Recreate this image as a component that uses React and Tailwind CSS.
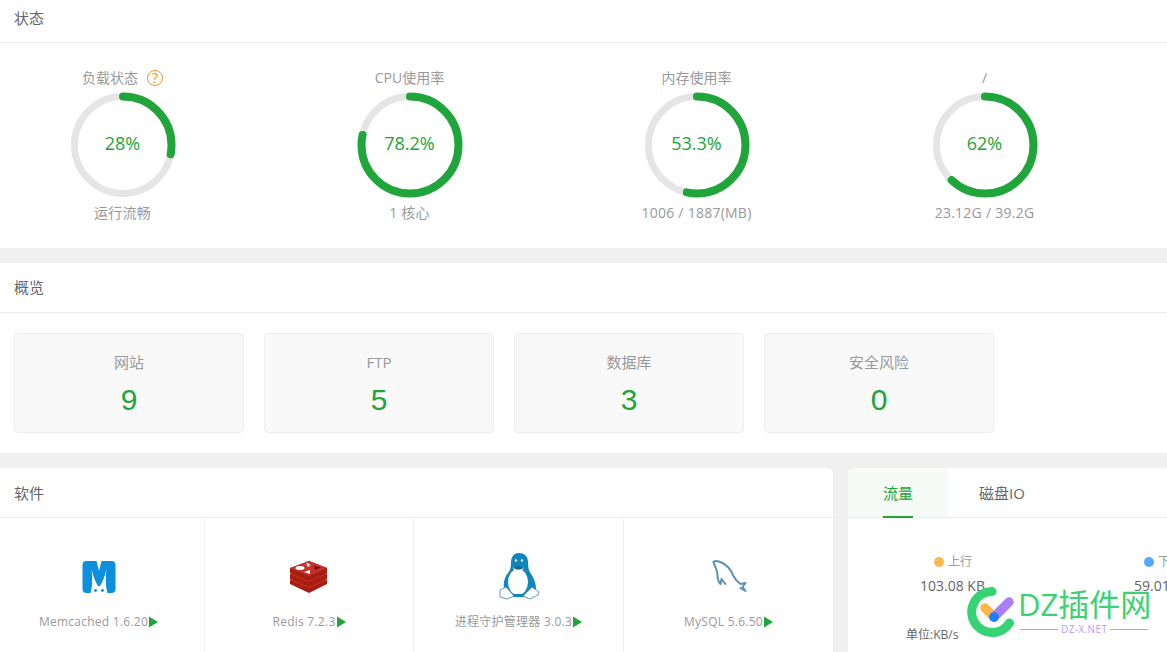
const FONT = 'font-["Open_Sans","Noto_Sans_CJK_SC",sans-serif]';

function Ring({ pct, label, title, sub, help, extra = "" }) {
  const r = 48.5;
  const c = 2 * Math.PI * r;
  return (
    <div className={`flex w-[245px] flex-col items-center ${extra}`}>
      <div className="flex h-5 items-center text-sm leading-5 text-[#999]">
        <span>{title}</span>
        {help && (
          <span className="ml-[9px] flex h-4 w-4 items-center justify-center rounded-full border border-[#f7932e] text-sm leading-none text-[#f7932e]">?</span>
        )}
      </div>
      <div className="relative mt-[5px] h-[104px] w-[104px]">
        <svg width="104" height="104" viewBox="0 0 104 104" className="-rotate-90 overflow-visible">
          <circle cx="52" cy="52" r={r} fill="none" stroke="#e5e5e5" strokeWidth="7" />
          <circle cx="52" cy="52" r={r} fill="none" stroke="#20a53a" strokeWidth="8" strokeLinecap="round" strokeDasharray={`${(pct / 100) * c} ${c}`} />
        </svg>
        <div className="absolute inset-0 flex items-center justify-center pb-1 text-lg text-[#20a53a]">{label}</div>
      </div>
      <div className="mt-[6px] text-sm leading-5 tracking-[0.25px] text-[#999]">{sub}</div>
    </div>
  );
}

function Stat({ title, value }) {
  return (
    <div className="flex h-[100px] w-[230px] flex-col items-center rounded-sm border border-[#eeeeee] bg-[#f9f9f9] pt-[18px]">
      <div className="text-[15px] leading-5 text-[#999]">{title}</div>
      <div className='mt-[9px] font-["Liberation_Sans",sans-serif] text-[30px] leading-[38px] text-[#20a53a]'>{value}</div>
    </div>
  );
}

function Play() {
  return (
    <svg width="9" height="12" viewBox="0 0 9 12" className="ml-[1px] shrink-0">
      <path d="M0 0.5 L9 6 L0 11.5 Z" fill="#20a53a" />
    </svg>
  );
}

function Memcached() {
  return (
    <svg width="60" height="64" viewBox="0 0 60 64">
      <rect x="13.5" y="16" width="33" height="32" rx="4" fill="#0d8fe0" />
      <path d="M27.5 16 L32.5 16 L30 26 Z" fill="#fff" />
      <path d="M22.5 24 C23.5 32 23.5 42 21.5 48 L38.5 48 C36.5 42 36.5 32 37.5 24 C36 31 33.5 37 31 41 L29 41 C26.5 37 24 31 22.5 24 Z" fill="#fff" />
      <circle cx="26.5" cy="45.5" r="1.4" fill="#0d8fe0" />
      <circle cx="33.5" cy="45.5" r="1.4" fill="#0d8fe0" />
    </svg>
  );
}

function Redis() {
  return (
    <svg width="60" height="64" viewBox="0 0 60 64">
      <g transform="translate(0,5)">
        <path d="M11 30 L30 23 L48 30 L48 34 L30 43 L11 34 Z" fill="#a41e11" />
        <path d="M11 30 L30 38 L48 30 L30 23 Z" fill="#d82c20" />
        <path d="M11 24 L30 17 L48 24 L48 29 L30 37 L11 29 Z" fill="#a41e11" />
        <path d="M11 24 L30 32 L48 24 L30 17 Z" fill="#d82c20" />
        <path d="M11 18 L30 11 L48 18 L48 23 L30 31 L11 23 Z" fill="#a41e11" />
        <path d="M11 18 L30 26 L48 18 L30 11 Z" fill="#c6302b" />
        <ellipse cx="21" cy="18" rx="4.5" ry="2" fill="#fff" />
        <path d="M27 13 L31 14 L30 16 L33 15 L29 17 Z" fill="#fff" />
        <path d="M25 22 L31 20 L31 24 Z" fill="#fff" />
        <path d="M35 16 L42 17.5 L36 20 Z" fill="#7a0c00" />
      </g>
    </svg>
  );
}

function Tux() {
  return (
    <svg width="60" height="64" viewBox="0 0 60 60">
      <path d="M30 6 C24 6 22 11 22 16 C22 21 21 23 19 26 C16 30 14 35 15 41 L18 47 L44 47 L47 42 C47 35 44 30 42 27 C40 24 39 21 39 15 C39 9 35 6 30 6 Z" fill="#0f86bd" />
      <ellipse cx="29" cy="35" rx="10" ry="13" fill="#fff" />
      <path d="M24 20 C26 23 33 23 35 20 L33 24 C31 26 27 26 25 24 Z" fill="#fff" />
      <path d="M25 21 C27 19 32 19 34 21 C32 23 27 23 25 21 Z" fill="#1c5f80" />
      <circle cx="27" cy="13.5" r="1.3" fill="#cfe6f2" />
      <circle cx="33" cy="13.5" r="1.3" fill="#cfe6f2" />
      <path d="M22 47 L38 47 L38 50 L22 50 Z" fill="#0f86bd" />
      <path d="M11 43 L17 40 L25 49 L18 52 L11 50 Z" fill="#fff" stroke="#4a90b8" strokeWidth="0.9" />
      <path d="M50 45 L43 40 L34 49 L41 52 L49 48 Z" fill="#fff" stroke="#4a90b8" strokeWidth="0.9" />
    </svg>
  );
}

function Dolphin() {
  return (
    <svg width="60" height="64" viewBox="0 0 60 64">
      <g transform="translate(1.5,5)" fill="none" stroke="#5c93b5" strokeLinecap="round" strokeLinejoin="round">
        <path d="M13 12 C15 10 18 11 22 13 C28 16 31 21 33 26 C35 30 37 32 40 34 L45 33 L42 37 L45 41 L40 38" strokeWidth="2" />
        <path d="M13 12 C14 16 17 20 17 25 C17 29 18 32 20 34 L21 29 L25 34" strokeWidth="2" />
      </g>
    </svg>
  );
}

function Soft({ icon, name, extra, border = true }) {
  return (
    <div className={`flex flex-col items-center pt-[27px] ${border ? "border-r border-[#eeeef5]" : ""} ${extra}`}>
      <div className="flex h-[64px] items-center justify-center">{icon}</div>
      <div className="mt-[3px] flex h-5 items-center whitespace-nowrap text-xs tracking-[0.25px] text-[#999]">
        <span>{name}</span>
        <Play />
      </div>
    </div>
  );
}

function Watermark() {
  return (
    <div className="absolute bottom-[15px] left-[967px] flex h-[50px] items-center">
      <svg width="51" height="50" viewBox="967 587 51 50" className="shrink-0">
        <path d="M992 591.5 A20.5 20.5 0 1 0 1009.5 623" fill="none" stroke="#35d374" strokeWidth="9" strokeLinecap="round" />
        <path d="M985 608 L994 617" stroke="#fdb745" strokeWidth="9.5" strokeLinecap="round" />
        <path d="M994 617 L1009 602" stroke="#a97ff7" strokeWidth="9.5" strokeLinecap="round" />
        <circle cx="994" cy="617" r="4.8" fill="#1a7ffb" />
      </svg>
      <div className="flex flex-col">
        <div className="-mt-[4px] whitespace-nowrap text-[31px] leading-[38px] text-[#3ad272]">DZ插件网</div>
        <div className="flex items-center gap-[3px] pl-[2px] text-[10px] leading-3 tracking-[0.4px] text-[#b79cf5]">
          <span className="h-px w-[38px] bg-[#b79cf5]" />
          <span>DZ-X.NET</span>
          <span className="h-px w-[38px] bg-[#b79cf5]" />
        </div>
      </div>
    </div>
  );
}

export default function App() {
  return (
    <div className={`relative flex h-[652px] w-[1167px] flex-col overflow-hidden bg-[#f0f0f0] ${FONT}`}>
      <section className="h-[248px] shrink-0 bg-white">
        <div className="flex h-[43px] items-center border-b border-[#eeeeee] pb-[6px] pl-[14px] text-[15px] text-[#666]">状态</div>
        <div className="flex gap-[42px] pt-[25px]">
          <Ring pct={28} label="28%" title="负载状态" sub="运行流畅" help />
          <Ring pct={78.2} label="78.2%" title="CPU使用率" sub="1 核心" />
          <Ring pct={53.3} label="53.3%" title="内存使用率" sub="1006 / 1887(MB)" />
          <Ring pct={62} label="62%" title="/" sub="23.12G / 39.2G" extra="ml-[1px]" />
        </div>
      </section>

      <section className="mt-[15px] h-[190px] shrink-0 bg-white">
        <div className="flex h-[50px] items-center border-b border-[#eeeeee] pl-[14px] text-[15px] text-[#666]">概览</div>
        <div className="flex gap-5 px-[14px] pt-5">
          <Stat title="网站" value="9" />
          <Stat title="FTP" value="5" />
          <Stat title="数据库" value="3" />
          <Stat title="安全风险" value="0" />
        </div>
      </section>

      <div className="mt-[15px] flex min-h-0 flex-1 gap-[15px]">
        <section className="w-[833px] shrink-0 rounded-tr-md bg-white">
          <div className="flex h-[50px] items-center border-b border-[#eeeef2] pl-[14px] pt-[2px] text-[15px] text-[#666]">软件</div>
          <div className="grid h-[134px] grid-cols-[205px_209px_210px_209px]">
            <Soft icon={<Memcached />} name="Memcached 1.6.20" extra="pr-[7px]" />
            <Soft icon={<Redis />} name="Redis 7.2.3" extra="" />
            <Soft icon={<Tux />} name="进程守护管理器 3.0.3" extra="" />
            <Soft icon={<Dolphin />} name="MySQL 5.6.50" extra="" border={false} />
          </div>
        </section>

        <section className="min-w-0 flex-1 overflow-hidden rounded-tl-md bg-white">
          <div className="flex h-[50px] border-b border-[#eeeeee] text-[15px]">
            <div className="flex w-[100px] justify-center bg-[#f6fbf7] text-[#20a53a]">
              <div className="flex h-[50px] w-[30px] items-center justify-center whitespace-nowrap border-b-2 border-[#20a53a] pt-[2px]">流量</div>
            </div>
            <div className="ml-[31px] flex items-center pt-[2px] text-[#666]">磁盘IO</div>
          </div>
          <div className="relative flex w-[420px] pl-[58px] pt-[34px]">
            <div className="flex w-[214px] flex-col items-start">
              <div className="flex h-5 items-center pl-[28px] text-xs text-[#999]">
                <span className="mr-[4px] h-[10px] w-[10px] rounded-full bg-[#fdb74e]" />上行
              </div>
              <div className="mt-[4px] whitespace-nowrap pl-[14px] text-sm leading-5 text-[#666]">103.08 KB</div>
              <div className="mt-[29px] whitespace-nowrap text-xs leading-5 text-[#666]">单位:KB/s</div>
            </div>
            <div className="flex flex-col items-start">
              <div className="flex h-5 items-center whitespace-nowrap pl-[24px] text-xs text-[#999]">
                <span className="mr-[4px] h-[10px] w-[10px] rounded-full bg-[#52a9ff]" />下行
              </div>
              <div className="mt-[4px] whitespace-nowrap pl-[14px] text-sm leading-5 text-[#666]">59.01 KB</div>
            </div>
          </div>
        </section>
      </div>
      <Watermark />
    </div>
  );
}
